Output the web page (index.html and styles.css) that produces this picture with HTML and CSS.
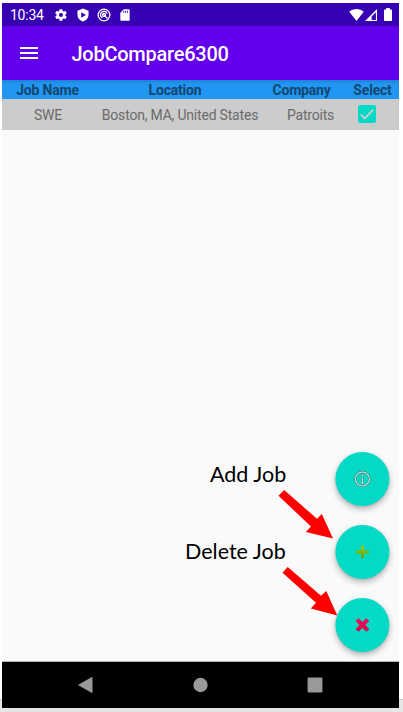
FILE: index.html
```
<!DOCTYPE html>
<html lang="en">
<head>
<meta charset="utf-8">
<title>JobCompare6300</title>
<link rel="stylesheet" href="styles.css">
</head>
<body>
<div class="page">
<div class="phone">
  <header class="status">
    <span class="time">10:34</span>
    <svg class="status-icon gear" viewBox="0 0 24 24"><path fill-rule="evenodd" d="M19.4 13c.1-.7.1-1.300 0-2l2.100-1.600c.2-.2.3-.4.100-.700l-2-3.400c-.1-.2-.4-.3-.6-.2l-2.500 1a7 7 0 0 0-1.700-1l-.4-2.700a.5.5 0 0 0-.5-.4h-4a.5.5 0 0 0-.5.4L9 5.100a7 7 0 0 0-1.700 1l-2.400-1c-.3-.1-.5 0-.7.2l-2 3.400c-.1.3 0 .5.200.700L4.500 11c-.1.700-.1 1.300 0 2l-2.100 1.600c-.2.2-.3.4-.2.700l2 3.400c.2.200.4.300.7.200l2.400-1a7 7 0 0 0 1.700 1l.4 2.700c0 .2.200.400.5.400h4c.3 0 .5-.2.5-.4l.4-2.700a7 7 0 0 0 1.700-1l2.500 1c.2.1.5 0 .6-.2l2-3.400c.2-.3.100-.5-.1-.7zM12 15.500a3.500 3.500 0 1 1 0-7 3.500 3.500 0 0 1 0 7z"/></svg>
    <svg class="status-icon shield" viewBox="0 0 24 24"><path fill-rule="evenodd" d="M12 1 2.500 4.500V11c0 6 4 10.500 9.500 12 5.500-1.500 9.500-6 9.500-12V4.500zM9 7.300l8 4.700-8 4.700z"/></svg>
    <svg class="status-icon sync" viewBox="0 0 24 24"><g fill="none" stroke="#fff" stroke-width="2.200"><circle cx="12" cy="12" r="10"/><path d="M9 17a6 6 0 1 1 8.500-7.500M10 10l8 8"/><circle cx="12" cy="12" r="2.800"/></g></svg>
    <svg class="status-icon card" viewBox="0 0 24 24"><path fill-rule="evenodd" d="M18 2h-8L4 8v12c0 1.100.9 2 2 2h12a2 2 0 0 0 2-2V4a2 2 0 0 0-2-2zM9 8h1.600V4.500H9zM12.300 8h1.600V4.500h-1.600zM15.600 8h1.600V4.500h-1.600z"/></svg>
    <span class="spacer"></span>
    <svg class="wifi" viewBox="0 0 15 12"><path d="M.3 2.800C4.500-.8 10.500-.8 14.700 2.800L7.500 12z"/></svg>
    <svg class="signal" viewBox="0 0 12 12"><path fill-rule="evenodd" d="M12 0v12H0zM10.900 3.200 6.600 7.500V10.900h4.300z"/></svg>
    <svg class="battery" viewBox="0 0 8 13"><path d="M2.200 0h3.600v1.500H7.300c.4 0 .7.300.7.700v10.100c0 .4-.3.700-.7.700H.7c-.4 0-.7-.3-.7-.7V2.200c0-.4.300-.7.700-.7h1.500z"/></svg>
  </header>
  <div class="appbar">
    <svg class="menu" viewBox="0 0 18 12"><path d="M0 1h18M0 6h18M0 11h18" stroke="#fff" stroke-width="2"/></svg>
    <h1 class="title">JobCompare6300</h1>
  </div>
  <div class="columns head">
    <span>Job Name</span><span>Location</span><span>Company</span><span>Select</span>
  </div>
  <div class="columns job">
    <span>SWE</span><span>Boston, MA, United States</span><span>Patroits</span>
    <svg class="check" viewBox="0 0 18 18"><rect width="18" height="18" rx="2" fill="#03dac5"/><path d="m2.700 9.300 4 4 8.600-8.600" fill="none" stroke="#ccc" stroke-width="1.900"/></svg>
  </div>
  <main class="content"></main>
  <nav class="navbar">
    <svg viewBox="0 0 18 18"><path d="M15.500 1.200c.5-.3 1 0 1 .5v14.600c0 .5-.5.800-1 .5L2.700 9.600c-.5-.3-.5-.9 0-1.200z"/></svg>
    <svg viewBox="0 0 18 18"><circle cx="9.500" cy="9" r="7.200"/></svg>
    <svg viewBox="0 0 18 18"><rect x="1.600" y="1.600" width="14.800" height="14.800" rx="1"/></svg>
  </nav>
  <div class="fabs">
    <button class="fab" aria-label="Info"><svg viewBox="0 0 18 18"><g fill="none" stroke="#477f79" stroke-width="2.300"><circle cx="9" cy="9" r="7"/><path d="M9 4.500v1.600M9 7.500v5.800"/></g><g fill="none" stroke="#c5eee9" stroke-width="1.100"><circle cx="9" cy="9" r="7"/><path d="M9 4.500v1.600M9 7.500v5.800M7.800 13h2.400"/></g></svg></button>
    <button class="fab" aria-label="Add job"><svg viewBox="0 0 18 18"><defs><linearGradient id="green" x2="0" y2="1"><stop stop-color="#a0d000"/><stop offset="1" stop-color="#659c08"/></linearGradient></defs><path d="M7.600 2.500h2.800v5.100H15.500v2.800H10.400V15.200H7.600V10.400H2.500V7.600H7.600z" fill="url(#green)"/></svg></button>
    <button class="fab" aria-label="Delete job"><svg viewBox="0 0 18 18"><defs><linearGradient id="red" x2="0" y2="1"><stop stop-color="#ff0058"/><stop offset="1" stop-color="#ce0b4b"/></linearGradient></defs><path d="m5 2.200 4 3.900 4-3.900 2.800 2.700L11.900 9l3.900 4-2.800 2.800-4-3.900-4 3.900L2.200 13l3.900-4-3.900-4.100z" fill="url(#red)"/></svg></button>
  </div>
</div>
<span class="callout add">Add Job</span>
<span class="callout delete">Delete Job</span>
<svg class="arrow arrow-add" viewBox="0 0 55 48"><path d="M5.200 0 38 28.800 42.800 24 54 48.400 26.800 42 32 36.500-.5 5.800z"/></svg>
<svg class="arrow arrow-delete" viewBox="0 0 55 48"><path d="M4.700 0 38 28.800 43.300 24 54.300 48.500 27.800 41.500 33 35.700-.5 5.700z"/></svg>
</div>
</body>
</html>
```
FILE: styles.css
```
* { box-sizing: border-box; }
body { margin: 0; background: #fff; font-family: Roboto, sans-serif; }
.page {
  position: relative;
  width: 403px;
  height: 712px;
  padding: 3px 4px 4px 2px;
  overflow: hidden;
  background: linear-gradient(#fff 699px, #c8c8c8 699px, #c8c8c8 700px, #e6e6e6 700px);
}
.phone {
  position: relative;
  width: 397px;
  height: 705px;
  display: flex;
  flex-direction: column;
  background: #fafafa;
}
.status {
  height: 23px;
  display: flex;
  align-items: center;
  padding: 0 7px 0 8px;
  background: #3700b3;
  color: #fff;
  fill: #fff;
}
.time { width: 44px; font-size: 14px; letter-spacing: -.25px; line-height: 23px; padding-top: 1px; }
.status-icon { width: 14px; height: 14px; }
.shield { margin-left: 7.500px; }
.sync { margin-left: 7px; }
.card { margin-left: 7.500px; }
.spacer { flex: 1; }
.wifi { width: 15px; height: 12px; }
.signal { width: 12px; height: 12px; margin-left: 1px; }
.battery { width: 8px; height: 13px; margin-left: 7px; }
.appbar {
  height: 54px;
  display: flex;
  align-items: center;
  padding-left: 18px;
  background: #6200ee;
  color: #fff;
}
.menu { width: 18px; height: 12px; }
.title { margin: 2px 0 0 33.500px; font-size: 20px; letter-spacing: -.25px; font-weight: 500; line-height: 24px; }
.columns {
  display: grid;
  align-items: center;
  text-align: center;
  white-space: nowrap;
  font-size: 14px;
  letter-spacing: -.2px;
}
.head {
  height: 19px;
  grid-template-columns: 91px 164px 89px 53px;
  background: linear-gradient(#1d82d3, #2196f3 4px);
  color: #13476f;
  font-weight: 700;
  line-height: 19px;
  padding-top: 1px;
}
.job {
  height: 31px;
  grid-template-columns: 92px 172px 89px 23px;
  background: #ccc;
  color: #6b6b6b;
}
.check { width: 18px; height: 18px; justify-self: center; margin-bottom: 1px; }
.content { flex: 1; border-bottom: 1px solid #b5b5b5; }
.navbar {
  height: 46px;
  display: flex;
  align-items: center;
  justify-content: center;
  gap: 97px;
  padding-right: 2px;
  background: #000;
  fill: #999;
}
.navbar svg { width: 18px; height: 18px; }
.fabs {
  position: absolute;
  right: 10px;
  bottom: 56px;
  display: flex;
  flex-direction: column;
  gap: 19px;
  transform: translateX(.4px);
}
.fab {
  width: 54px;
  height: 54px;
  padding: 0;
  border: 0;
  border-radius: 50%;
  display: grid;
  place-items: center;
  background: #03dac5;
  box-shadow: 0 3px 6px rgba(0, 0, 0, .28), 0 1px 3px rgba(0, 0, 0, .08);
}
.fab svg { width: 18px; height: 18px; }
.callout {
  position: absolute;
  color: #000;
  font-family: Lato, sans-serif;
  font-size: 21.5px;
  line-height: 26px;
  white-space: nowrap;
}
.add { left: 210px; top: 461px; }
.delete { left: 185px; top: 538px; }
.arrow { position: absolute; width: 55px; height: 48px; fill: #f00; overflow: visible; }
.arrow-add { left: 278.500px; top: 490px; }
.arrow-delete { left: 282.500px; top: 567px; }
```
